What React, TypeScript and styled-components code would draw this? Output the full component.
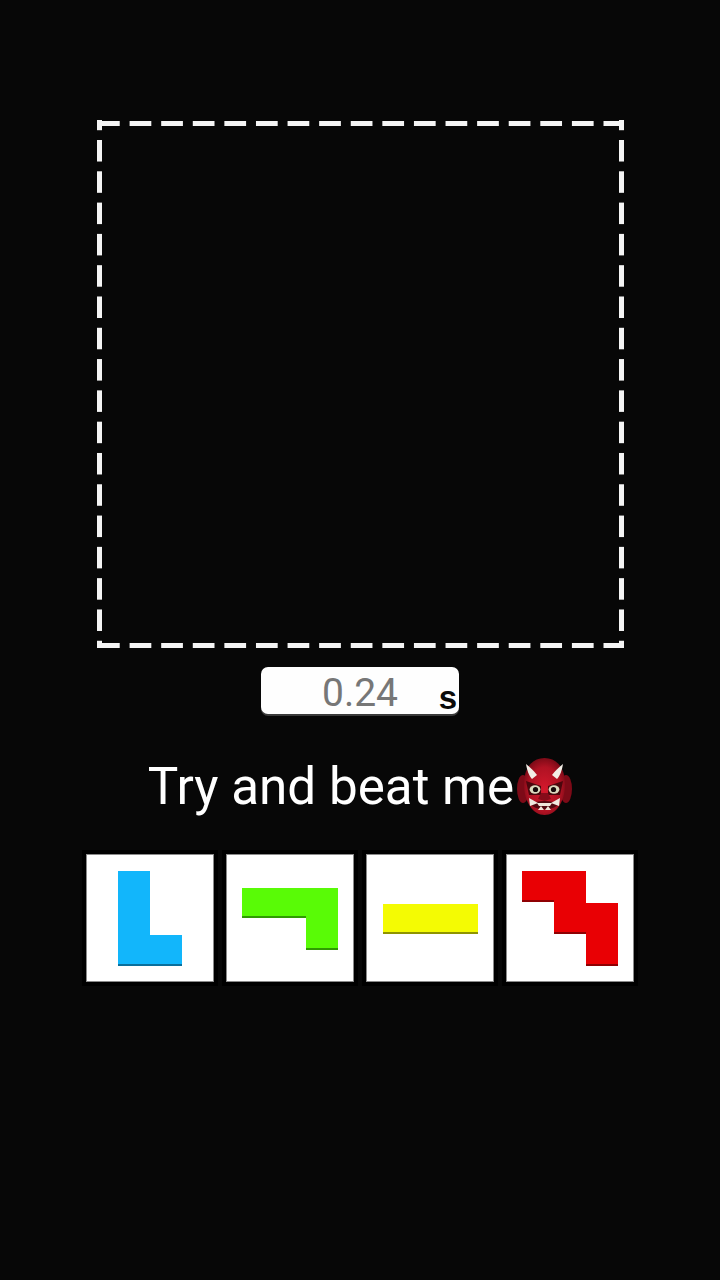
import React from "react";
import styled, { createGlobalStyle } from "styled-components";

const GlobalStyle = createGlobalStyle`
  html, body {
    margin: 0;
    padding: 0;
    background: #070707;
  }
`;

type PieceData = {
  id: string;
  fill: string;
  edge: string;
  shape: string;
  shadow: string;
};

const pieces: PieceData[] = [
  {
    id: "blue",
    fill: "#12b6fb",
    edge: "#0a6f9c",
    shape: "M32 17H64V81H96V112H32Z",
    shadow: "M32 111H96",
  },
  {
    id: "green",
    fill: "#59fb06",
    edge: "#2f9a02",
    shape: "M16 34H112V96H80V64H16Z",
    shadow: "M16 63H80M80 95H112",
  },
  {
    id: "yellow",
    fill: "#f4fb03",
    edge: "#8f9400",
    shape: "M17 50H112V80H17Z",
    shadow: "M17 79H112",
  },
  {
    id: "red",
    fill: "#e90004",
    edge: "#8f0003",
    shape: "M16 17H80V49H112V112H80V80H48V48H16Z",
    shadow: "M16 47H48M48 79H80M80 111H112",
  },
];

const OgreIcon = () => (
  <svg width="55" height="57" viewBox="0 0 55 57">
    <defs>
      <radialGradient id="ogreFace" cx="50%" cy="55%" r="60%">
        <stop offset="0%" stopColor="#d4182c" />
        <stop offset="65%" stopColor="#b01223" />
        <stop offset="100%" stopColor="#6d0813" />
      </radialGradient>
    </defs>
    <ellipse cx="6" cy="31" rx="6" ry="14" fill="#7d0a17" />
    <ellipse cx="49" cy="31" rx="6" ry="14" fill="#7d0a17" />
    <path d="M27.5 0C15 0 7 10 7 26C7 44 16 57 27.5 57C39 57 48 44 48 26C48 10 40 0 27.5 0Z" fill="url(#ogreFace)" />
    <path d="M9 6C10 12 12 18 15 21L20 17C17 13 13 9 9 6Z" fill="#f3eee6" />
    <path d="M46 6C45 12 43 18 40 21L35 17C38 13 42 9 46 6Z" fill="#f3eee6" />
    <path d="M9 23L24 28L24 37L12 37Z" fill="#4a070d" />
    <path d="M46 23L31 28L31 37L43 37Z" fill="#4a070d" />
    <ellipse cx="18" cy="31.5" rx="5.4" ry="4.2" fill="#ddd9be" />
    <ellipse cx="37" cy="31.5" rx="5.4" ry="4.2" fill="#ddd9be" />
    <circle cx="18.5" cy="31.5" r="2.6" fill="#16090a" />
    <circle cx="36.5" cy="31.5" r="2.6" fill="#16090a" />
    <path d="M24 35H31L34 41L27.5 43L21 41Z" fill="#860b19" />
    <path d="M14 46C20 42 35 42 41 46C38 53 17 53 14 46Z" fill="#520810" />
    <path d="M12 40L21 45L13 48Z" fill="#f0e8df" />
    <path d="M43 40L34 45L42 48Z" fill="#f0e8df" />
    <path d="M20 45H35L33 48H22Z" fill="#efe5da" />
    <path d="M21 52L24 48L27 52Z" fill="#efe5da" />
    <path d="M28 52L31 48L34 52Z" fill="#efe5da" />
  </svg>
);

const App = () => {
  return (
    <PageStyled>
      <GlobalStyle />
      <BoardStyled />
      <TimerStyled>
        <TimerValueStyled>0.24</TimerValueStyled>
        <TimerUnitStyled>s</TimerUnitStyled>
      </TimerStyled>
      <TauntStyled>
        Try and beat me
        <OgreIcon />
      </TauntStyled>
      <TrayStyled>
        {pieces.map((piece) => (
          <TileStyled key={piece.id}>
            <svg width="128" height="128" viewBox="0 0 128 128">
              <path d={piece.shape} fill={piece.fill} />
              <path d={piece.shadow} stroke={piece.edge} strokeWidth="2" fill="none" />
            </svg>
          </TileStyled>
        ))}
      </TrayStyled>
    </PageStyled>
  );
};

export default App;

const PageStyled = styled.div`
  display: flex;
  flex-direction: column;
  align-items: center;
  width: 720px;
  height: 1280px;
  padding-top: 120px;
  box-sizing: border-box;
  overflow: hidden;
  background: #070707;
`;

// dashed frame, drawn with gradients so the dash length and phase can be tuned
const BoardStyled = styled.div`
  width: 528px;
  height: 528px;
  flex-shrink: 0;
  background-image:
    linear-gradient(to right, #f4f4f4 22px, transparent 22px),
    linear-gradient(to right, #f4f4f4 22px, transparent 22px),
    linear-gradient(to bottom, #f4f4f4 22px, transparent 22px),
    linear-gradient(to bottom, #f4f4f4 22px, transparent 22px);
  background-size:
    31.6px 5px,
    31.6px 5px,
    5px 31.3px,
    5px 31.3px;
  background-repeat: repeat-x, repeat-x, repeat-y, repeat-y;
  background-position:
    2px 1px,
    2px 523px,
    1px 20px,
    523px 20px;
`;

const TimerStyled = styled.div`
  position: relative;
  display: flex;
  justify-content: center;
  align-items: center;
  width: 198px;
  height: 47px;
  margin-top: 19px;
  border-radius: 7px;
  background: #fefefe;
  box-shadow: 0 2px 0 #3a3a3a;
`;

const TimerValueStyled = styled.span`
  padding-top: 5px;
  font-family: Roboto, "Liberation Sans", sans-serif;
  font-size: 39px;
  line-height: 47px;
  color: #777;
`;

const TimerUnitStyled = styled.span`
  position: absolute;
  right: 2px;
  bottom: -2px;
  font-family: "Liberation Sans", sans-serif;
  font-weight: 700;
  font-size: 33px;
  line-height: 36px;
  color: #0a0a0a;
`;

const TauntStyled = styled.div`
  display: flex;
  align-items: center;
  height: 58px;
  margin-top: 43px;
  font-family: Roboto, "Liberation Sans", sans-serif;
  font-size: 51.2px;
  color: #fff;
  white-space: nowrap;
  svg {
    flex-shrink: 0;
    margin-left: 3px;
  }
`;

const TrayStyled = styled.div`
  display: flex;
  gap: 12px;
  margin-top: 39px;
`;

const TileStyled = styled.div`
  width: 128px;
  height: 128px;
  background: #fff;
  box-shadow:
    inset 0 0 0 1px #8a8a8a,
    0 0 0 4px #000;
  svg {
    display: block;
  }
`;
